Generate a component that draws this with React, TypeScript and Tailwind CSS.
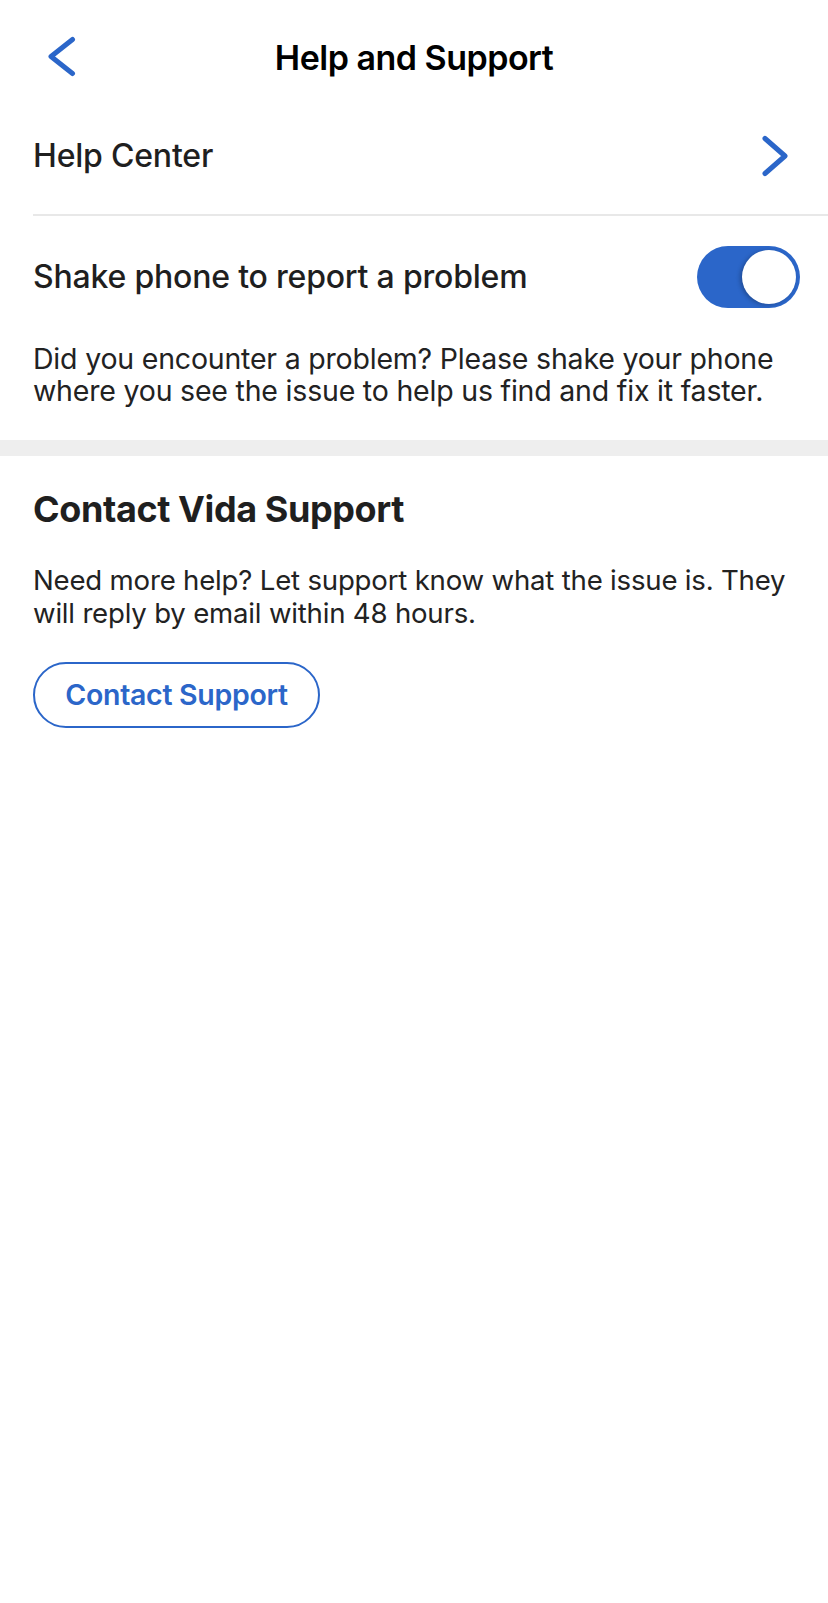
import React from "react";

const BLUE = "#2B66C9";

export default function App() {
  return (
    <div
      className="w-[828px] min-h-[1603px] bg-white text-[#1f1f1f]"
      style={{ fontFamily: "Inter, 'Noto Sans', sans-serif" }}
    >
      {/* Header */}
      <div className="grid grid-cols-[120px_1fr_120px] items-center h-[114px]">
        <div className="pl-[48px] flex items-center">
          <svg width="28" height="42" viewBox="0 0 28 42" fill="none">
            <polyline
              points="24.5,3.5 3,20.5 24.5,37.5"
              stroke={BLUE}
              strokeWidth="5"
              strokeLinecap="round"
              strokeLinejoin="round"
            />
          </svg>
        </div>
        <div className="text-center text-[34px] font-semibold text-black tracking-[-0.5px]">
          Help and Support
        </div>
        <div />
      </div>

      {/* Help Center row */}
      <div className="flex items-center justify-between h-[100px] pb-[16px] pl-[33px] pr-[40px]">
        <span className="text-[32px] font-medium tracking-[-0.2px]">Help Center</span>
        <svg width="26" height="42" viewBox="0 0 26 42" fill="none">
          <polyline
            points="3,3.5 23,21 3,38.5"
            stroke={BLUE}
            strokeWidth="5"
            strokeLinecap="round"
            strokeLinejoin="round"
          />
        </svg>
      </div>
      <div className="ml-[33px] h-[2px] bg-[#e8e8e8]" />

      {/* Shake row */}
      <div className="pt-[30px] pl-[33px] pr-[28px]">
        <div className="flex items-center justify-between h-[62px]">
          <span className="text-[32px] font-medium tracking-[-0.2px]">
            Shake phone to report a problem
          </span>
          <div className="w-[103px] h-[62px] rounded-full bg-[#2B66C9] flex items-center justify-end pr-[4px]">
            <div className="w-[54px] h-[54px] rounded-full bg-white shadow-[-2px_1px_4px_rgba(0,0,0,0.25)]" />
          </div>
        </div>
        <p className="mt-[35px] pb-[33px] text-[28.5px] leading-[32px] text-[#222] tracking-[-0.2px]">
          Did you encounter a problem? Please shake your phone
          <br />
          where you see the issue to help us find and fix it faster.
        </p>
      </div>

      <div className="h-[16px] bg-[#eeeeee]" />

      {/* Contact section */}
      <div className="pt-[31px] px-[33px]">
        <h2 className="text-[36px] leading-[44px] font-bold text-[#1f1f1f] tracking-[-0.4px]">
          Contact Vida Support
        </h2>
        <p className="mt-[33px] text-[27.6px] leading-[33px] text-[#222] tracking-[-0.2px]">
          Need more help? Let support know what the issue is. They
          <br />
          will reply by email within 48 hours.
        </p>
        <button className="mt-[32px] w-[287px] h-[66px] rounded-full border-2 border-[#2B66C9] text-[#2B66C9] text-[28.5px] font-semibold tracking-[-0.3px] flex items-center justify-center">
          Contact Support
        </button>
      </div>
    </div>
  );
}
